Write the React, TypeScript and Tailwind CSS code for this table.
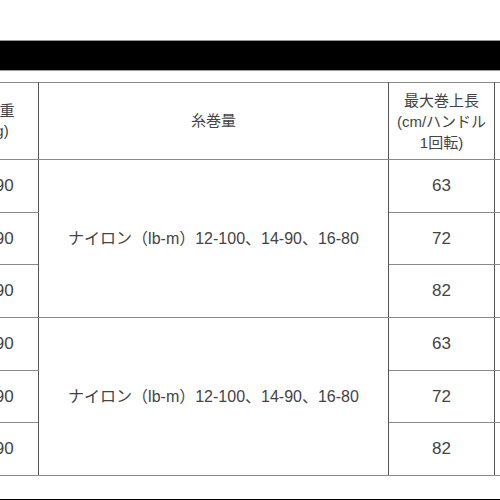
export default function App() {
  const groups = [
    { rows: [["190", "63"], ["190", "72"], ["190", "82"]] },
    { rows: [["190", "63"], ["190", "72"], ["190", "82"]] },
  ];
  const rowH = ["h-[53px]", "h-[52px]", "h-[53px]"];
  const cell = "border border-x-[#555] border-y-[#8a8a8a] text-center align-middle p-0";
  return (
    <div className="w-[500px] h-[500px] overflow-hidden bg-white text-[#444] font-['Liberation_Sans','Noto_Sans_CJK_JP',sans-serif]">
      <div className="h-[40px]" />
      <div className="h-[31px] bg-black border-y border-[#9a9a9a]" />
      <div className="h-[11px]" />
      <div className="ml-[-40px] w-[700px]">
        <table className="border-collapse table-fixed w-[694px]">
          <colgroup>
            <col className="w-[78px]" />
            <col className="w-[350px]" />
            <col className="w-[106px]" />
            <col className="w-[160px]" />
          </colgroup>
          <thead>
            <tr className="h-[77px]">
              <th className={`${cell} font-normal text-[15px] leading-[20px]`}>
                自重
                <br />
                (g)
              </th>
              <th className={`${cell} font-normal text-[15px]`}>糸巻量</th>
              <th className={`${cell} font-normal text-[15px] leading-[21px]`}>
                最大巻上長
                <br />
                (cm/ハンドル
                <br />
                1回転)
              </th>
              <th className={`${cell} font-normal text-[15px]`} />
            </tr>
          </thead>
          <tbody>
            {groups.map((g, gi) =>
              g.rows.map((r, ri) => (
                <tr key={`${gi}-${ri}`} className={rowH[ri]}>
                  <td className={`${cell} text-[17px]`}>{r[0]}</td>
                  {ri === 0 && (
                    <td rowSpan={3} className={`${cell} text-[16px]`}>
                      ナイロン（lb-m）12-100、14-90、16-80
                    </td>
                  )}
                  <td className={`${cell} text-[17px]`}>{r[1]}</td>
                  <td className={`${cell} text-[17px]`} />
                </tr>
              ))
            )}
          </tbody>
        </table>
      </div>
      <div className="h-[23px]" />
      <div className="h-[6px] bg-black" />
    </div>
  );
}
